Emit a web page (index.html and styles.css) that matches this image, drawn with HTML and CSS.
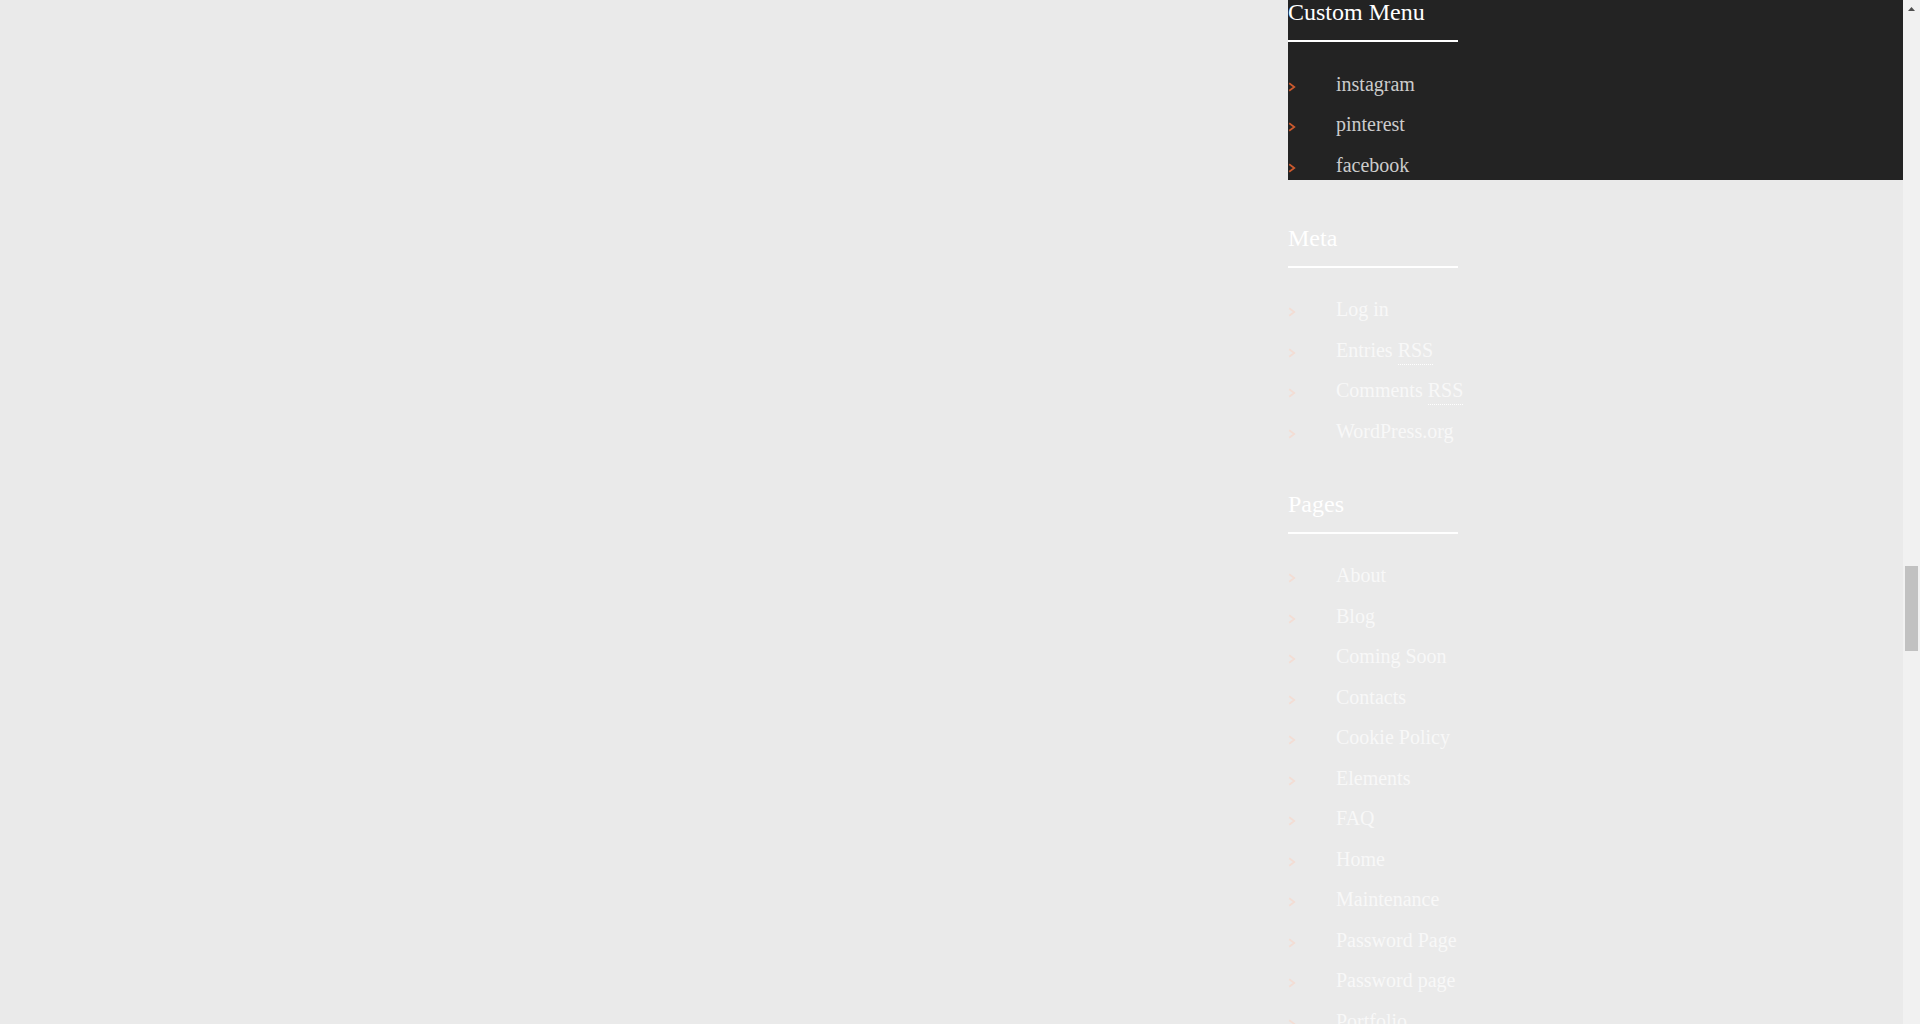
FILE: index.html
```html
<!DOCTYPE html>
<html lang="en">
<head>
<meta charset="utf-8">
<title>Sidebar</title>
<link rel="stylesheet" href="styles.css">
</head>
<body>
<div class="frame">
  <div class="page">
    <main class="content"></main>
    <aside class="sidebar">
      <section class="widget widget-dark">
        <h2 class="widget-title">Custom Menu</h2>
        <ul class="menu">
          <li><svg class="chev" viewBox="0 0 8 10"><path d="M1.2 1.2L6.3 5L1.2 8.8"/></svg><a href="#">instagram</a></li>
          <li><svg class="chev" viewBox="0 0 8 10"><path d="M1.2 1.2L6.3 5L1.2 8.8"/></svg><a href="#">pinterest</a></li>
          <li><svg class="chev" viewBox="0 0 8 10"><path d="M1.2 1.2L6.3 5L1.2 8.8"/></svg><a href="#">facebook</a></li>
        </ul>
      </section>
      <section class="widget">
        <h2 class="widget-title">Meta</h2>
        <ul class="menu">
          <li><svg class="chev" viewBox="0 0 8 10"><path d="M1.2 1.2L6.3 5L1.2 8.8"/></svg><a href="#">Log in</a></li>
          <li><svg class="chev" viewBox="0 0 8 10"><path d="M1.2 1.2L6.3 5L1.2 8.8"/></svg><a href="#">Entries <abbr title="Really Simple Syndication">RSS</abbr></a></li>
          <li><svg class="chev" viewBox="0 0 8 10"><path d="M1.2 1.2L6.3 5L1.2 8.8"/></svg><a href="#">Comments <abbr title="Really Simple Syndication">RSS</abbr></a></li>
          <li><svg class="chev" viewBox="0 0 8 10"><path d="M1.2 1.2L6.3 5L1.2 8.8"/></svg><a href="#">WordPress.org</a></li>
        </ul>
      </section>
      <section class="widget">
        <h2 class="widget-title">Pages</h2>
        <ul class="menu">
          <li><svg class="chev" viewBox="0 0 8 10"><path d="M1.2 1.2L6.3 5L1.2 8.8"/></svg><a href="#">About</a></li>
          <li><svg class="chev" viewBox="0 0 8 10"><path d="M1.2 1.2L6.3 5L1.2 8.8"/></svg><a href="#">Blog</a></li>
          <li><svg class="chev" viewBox="0 0 8 10"><path d="M1.2 1.2L6.3 5L1.2 8.8"/></svg><a href="#">Coming Soon</a></li>
          <li><svg class="chev" viewBox="0 0 8 10"><path d="M1.2 1.2L6.3 5L1.2 8.8"/></svg><a href="#">Contacts</a></li>
          <li><svg class="chev" viewBox="0 0 8 10"><path d="M1.2 1.2L6.3 5L1.2 8.8"/></svg><a href="#">Cookie Policy</a></li>
          <li><svg class="chev" viewBox="0 0 8 10"><path d="M1.2 1.2L6.3 5L1.2 8.8"/></svg><a href="#">Elements</a></li>
          <li><svg class="chev" viewBox="0 0 8 10"><path d="M1.2 1.2L6.3 5L1.2 8.8"/></svg><a href="#">FAQ</a></li>
          <li><svg class="chev" viewBox="0 0 8 10"><path d="M1.2 1.2L6.3 5L1.2 8.8"/></svg><a href="#">Home</a></li>
          <li><svg class="chev" viewBox="0 0 8 10"><path d="M1.2 1.2L6.3 5L1.2 8.8"/></svg><a href="#">Maintenance</a></li>
          <li><svg class="chev" viewBox="0 0 8 10"><path d="M1.2 1.2L6.3 5L1.2 8.8"/></svg><a href="#">Password Page</a></li>
          <li><svg class="chev" viewBox="0 0 8 10"><path d="M1.2 1.2L6.3 5L1.2 8.8"/></svg><a href="#">Password page</a></li>
          <li><svg class="chev" viewBox="0 0 8 10"><path d="M1.2 1.2L6.3 5L1.2 8.8"/></svg><a href="#">Portfolio</a></li>
        </ul>
      </section>
    </aside>
  </div>
  <div class="scrollbar" aria-hidden="true">
    <div class="sb-button"><svg viewBox="0 0 7 4" class="sb-arrow"><polygon points="0,4 3.5,0 7,4"/></svg></div>
    <div class="sb-track"><div class="sb-thumb"></div></div>
    <div class="sb-button"><svg viewBox="0 0 7 4" class="sb-arrow"><polygon points="0,0 7,0 3.5,4"/></svg></div>
  </div>
</div>
</body>
</html>
```

FILE: styles.css
```css
html, body {
  margin: 0;
  padding: 0;
}

body {
  background: #eaeaea;
  font-family: "Liberation Serif", "Times New Roman", serif;
  color: #f6f6f6;
}

.frame {
  display: grid;
  grid-template-columns: 1fr 17px;
  height: 100vh;
  overflow: hidden;
}

.page {
  display: grid;
  grid-template-columns: 1288px 1fr;
  align-items: start;
  min-width: 0;
}

.sidebar {
  min-width: 0;
}

.widget {
  margin-bottom: 46px;
}

.widget-dark {
  background: #232323;
}

.widget-title {
  margin: 0;
  width: 170px;
  font-size: 24px;
  line-height: 25px;
  font-weight: normal;
  color: #ffffff;
  padding-bottom: 15px;
  border-bottom: 2px solid #ffffff;
}

.menu {
  list-style: none;
  margin: 26.5px 0 0;
  padding: 0;
}

.menu li {
  font-size: 20px;
  line-height: 30px;
  margin-bottom: 10.5px;
  white-space: nowrap;
}

.menu li:last-child {
  margin-bottom: 0;
}

.menu a {
  color: #f8f8f8;
  text-decoration: none;
}

.menu abbr {
  text-decoration: none;
  border-bottom: 1px dotted #ffffff;
  padding-bottom: 3px;
}

.chev {
  width: 8px;
  height: 10px;
  vertical-align: -1px;
  margin-right: 40px;
  fill: none;
  stroke: #f3ddd4;
  stroke-width: 1.7;
}

.widget-dark .menu a {
  color: #cccccc;
}

.widget-dark .chev {
  stroke: #cc5a2e;
}

/* scrollbar strip as captured in the screenshot */
.scrollbar {
  display: flex;
  flex-direction: column;
  background: #f1f1f1;
  height: 100%;
}

.sb-button {
  height: 17px;
  flex: none;
  display: flex;
  align-items: center;
  justify-content: center;
}

.sb-arrow {
  width: 7px;
  height: 4px;
  fill: #505050;
}

.sb-track {
  flex: 1;
  padding: 0 2px;
}

.sb-thumb {
  margin-top: 549px;
  height: 85px;
  background: #c1c1c1;
}
```
